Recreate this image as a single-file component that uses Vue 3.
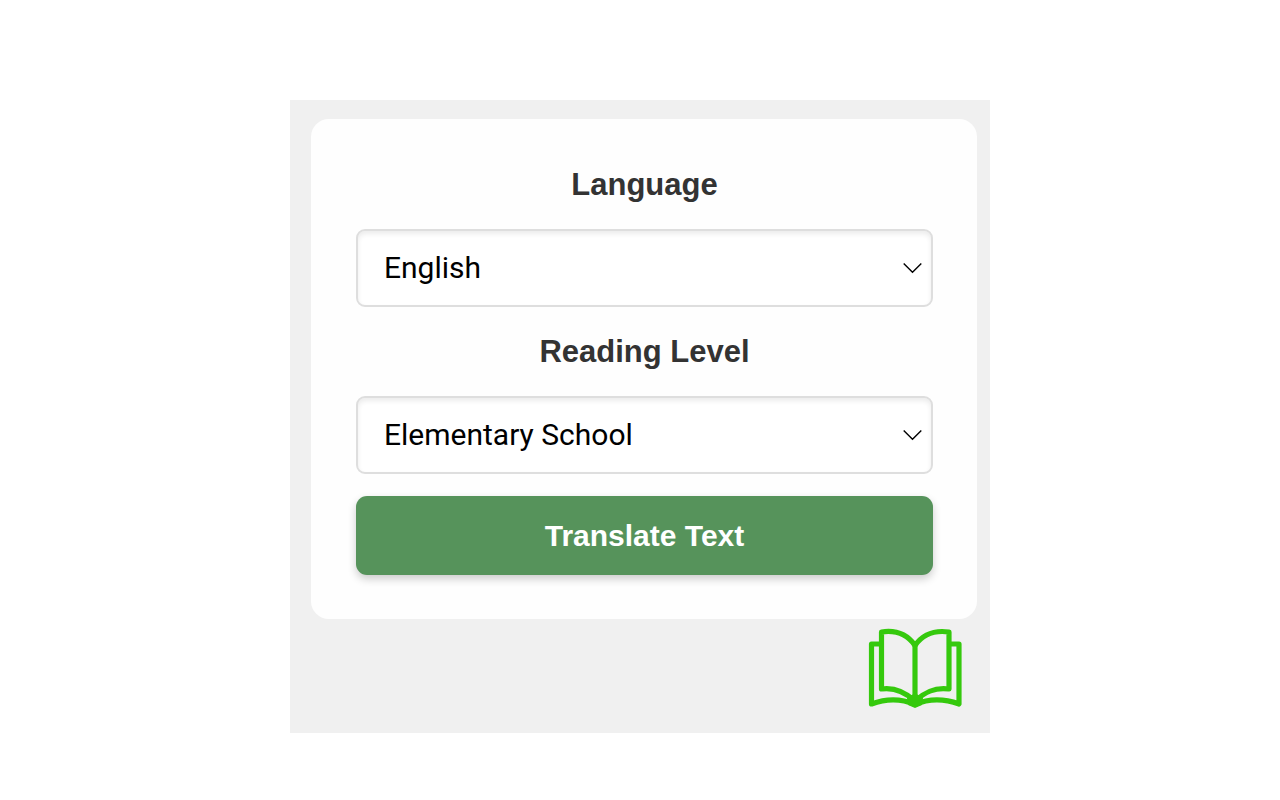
<script setup>
import { ref } from 'vue'

const fields = [
  { id: 'language', label: 'Language', value: ref('English'), options: ['English', 'Spanish', 'French', 'German'] },
  {
    id: 'reading-level',
    label: 'Reading Level',
    value: ref('Elementary School'),
    options: ['Elementary School', 'Middle School', 'High School', 'College'],
  },
]
</script>

<template>
  <main class="page">
    <section class="panel">
      <form class="card" @submit.prevent>
        <template v-for="field in fields" :key="field.id">
          <label class="label" :for="field.id">{{ field.label }}</label>
          <div class="select-wrap">
            <select :id="field.id" v-model="field.value.value" class="select">
              <option v-for="option in field.options" :key="option">{{ option }}</option>
            </select>
            <svg class="chevron" viewBox="0 0 20 12" aria-hidden="true">
              <path d="M1.7 1.5 L10.5 10.2 L19.300 1.5" fill="none" stroke="#000" stroke-width="1.4" />
            </svg>
          </div>
        </template>
        <button class="submit" type="submit">Translate Text</button>
      </form>
      <svg class="book" viewBox="0 0 96 82" aria-hidden="true">
        <defs>
          <filter id="book-soft" x="-5%" y="-5%" width="110%" height="110%">
            <feGaussianBlur stdDeviation="0.7" />
          </filter>
        </defs>
        <g filter="url(#book-soft)">
          <g fill="none" stroke="#36c90f" stroke-width="5.2" stroke-linejoin="round">
            <path d="M48 18.500 C40 7 28 3 14.500 5 V62 C28 60 38 65 48 74 C58 65 68 60 82 62 V5 C68 3 56 7 48 18.500 Z" />
            <path d="M48 18 V77" />
            <path d="M14 17 H4.500 V77 C18 72 34 71.500 48 77.500 C62 71.500 78 72 92 77 V17 H82" />
          </g>
          <path d="M40 71 L48 66 L56 71 L55 78 L48 81 L41 78 Z" fill="#36c90f" />
        </g>
      </svg>
    </section>
  </main>
</template>

<style>
body {
  background: #fff;
}
</style>

<style scoped>
.page {
  padding: 100px 20px 67px;
}

.panel {
  box-sizing: border-box;
  display: flex;
  flex-direction: column;
  max-width: 700px;
  margin: 0 auto;
  padding: 19px 13px 24px 21px;
  background: #f0f0f0;
}

.card {
  display: flex;
  flex-direction: column;
  gap: 22px;
  padding: 43px 44px 44px 45px;
  border-radius: 18px;
  background: #fefefe;
}

.label {
  color: #333;
  font: bold 31px/45px "Liberation Sans", Arial, sans-serif;
  text-align: center;
}

.select-wrap {
  position: relative;
  display: flex;
}

.select {
  appearance: none;
  box-sizing: border-box;
  width: 100%;
  height: 78px;
  margin: 0;
  padding: 0 48px 0 26px;
  border: 2px solid #dedede;
  border-radius: 9px;
  background: #fff;
  box-shadow: inset 0 3px 5px rgba(0, 0, 0, 0.08);
  color: #000;
  font: 30px/36px Roboto, sans-serif;
}

.chevron {
  position: absolute;
  top: 33px;
  right: 11px;
  width: 20px;
  height: 12px;
  pointer-events: none;
}

.submit {
  height: 79px;
  padding: 0 24px;
  border: 0;
  border-radius: 11px;
  background: #56935b;
  box-shadow: 0 4px 9px rgba(0, 0, 0, 0.2);
  color: #fff;
  font: bold 30px/36px "Liberation Sans", Arial, sans-serif;
  cursor: pointer;
}

.book {
  align-self: flex-end;
  width: 96px;
  height: 82px;
  margin: 8px 14px 0 0;
}
</style>
